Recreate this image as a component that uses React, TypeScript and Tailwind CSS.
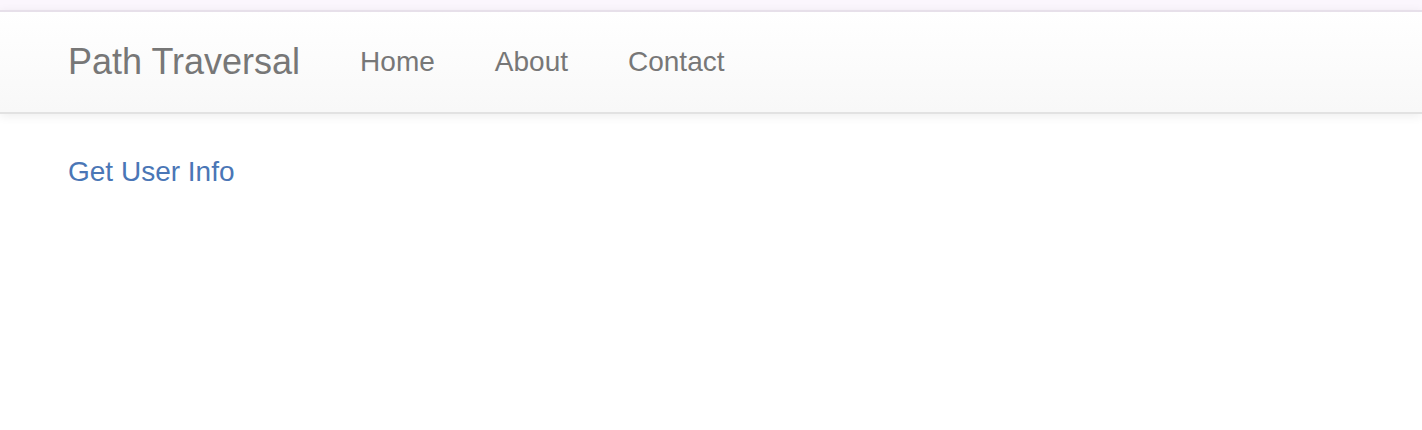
export default function App() {
  const links = ["Home", "About", "Contact"];

  return (
    <div className="min-h-screen bg-white font-['Liberation_Sans',Arial,sans-serif]">
      {/* thin strip above the navbar */}
      <div className="h-[10px] bg-[#fbf6fd]" />

      {/* Navbar */}
      <nav className="relative flex h-[104px] items-start border-y-2 border-t-[#e7e0ea] border-b-[#e2e2e2] bg-gradient-to-b from-white to-[#f8f8f8] pl-[38px] shadow-[0_2px_10px_rgba(0,0,0,0.075)]">
        <a href="#" className="px-[30px] py-[30px] text-[36px] leading-[40px] text-[#777777]">
          Path Traversal
        </a>
        <ul className="flex">
          {links.map((label) => (
            <li key={label}>
              <a href="#" className="block px-[30px] py-[30px] text-[28px] leading-[40px] text-[#777777]">
                {label}
              </a>
            </li>
          ))}
        </ul>
      </nav>

      {/* Content */}
      <main className="mt-[38px] px-[68px]">
        <a href="#" className="text-[28px] leading-[40px] text-[#4a76b6]">
          Get User Info
        </a>
      </main>
    </div>
  );
}
